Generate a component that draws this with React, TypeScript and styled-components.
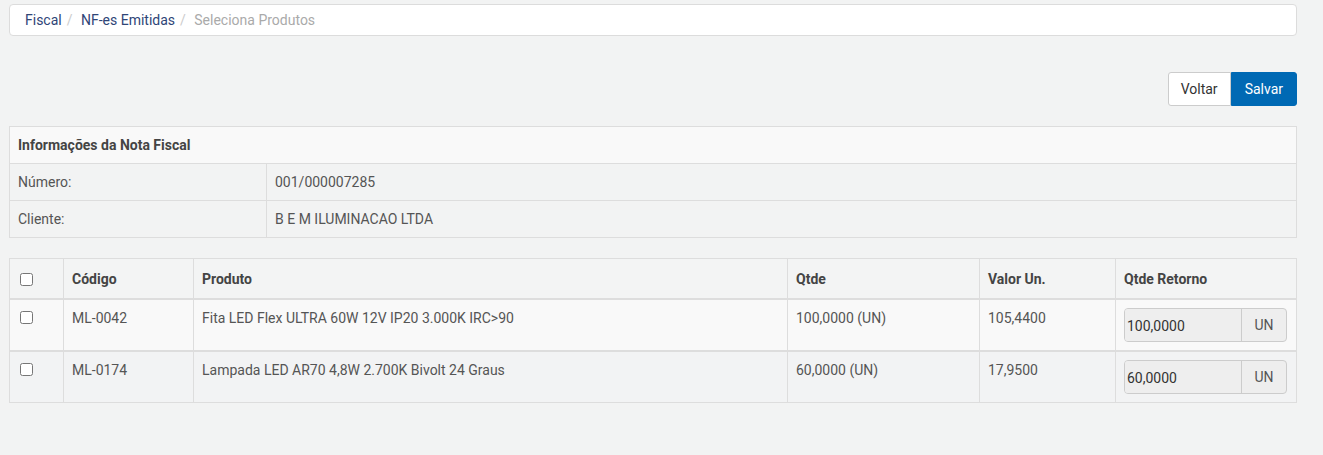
import React from 'react'
import styled, { createGlobalStyle } from 'styled-components'

const GlobalStyle = createGlobalStyle`
  body {
    margin: 0;
    background: #f2f3f3;
    font-family: Roboto, "Liberation Sans", sans-serif;
    font-size: 14px;
    color: #555;
  }
`

const Page = styled.div`
  padding: 4px 26px 40px 9px;
`

const Breadcrumb = styled.ol`
  display: flex;
  align-items: center;
  list-style: none;
  margin: 0;
  height: 32px;
  box-sizing: border-box;
  padding: 0 15px;
  background: #fff;
  border: 1px solid #dcdcdc;
  border-radius: 4px;
  line-height: 20px;
  & > li + li::before {
    content: '/\\00a0';
    color: #ccc;
    padding: 0 5px;
  }
`

const Crumb = styled.li<{ $active?: boolean }>`
  color: ${p => (p.$active ? '#aaa' : '#2f4577')};
`

const Toolbar = styled.div`
  display: flex;
  justify-content: flex-end;
  margin-top: 36px;
`

const Button = styled.button<{ $primary?: boolean }>`
  height: 34px;
  padding: 0 ${p => (p.$primary ? 13 : 12)}px;
  font-family: inherit;
  font-size: 14px;
  border: 1px solid ${p => (p.$primary ? '#0069b4' : '#ccc')};
  background: ${p => (p.$primary ? '#0069b4' : '#fff')};
  color: ${p => (p.$primary ? '#fff' : '#333')};
  border-radius: ${p => (p.$primary ? '0 3px 3px 0' : '3px 0 0 3px')};
`

const InfoTable = styled.table`
  width: 100%;
  margin-top: 20px;
  border-collapse: collapse;
  border: 1px solid #ddd;
`

const InfoHead = styled.th`
  text-align: left;
  font-weight: 700;
  color: #444;
  background: #f9f9f9;
  padding: 8px;
  line-height: 20px;
  border: 1px solid #ddd;
`

const InfoCell = styled.td<{ $label?: boolean }>`
  padding: 8px;
  line-height: 20px;
  border: 1px solid #ddd;
  width: ${p => (p.$label ? '240px' : 'auto')};
  color: #555;
`

const ItemTable = styled.table`
  width: 100%;
  margin-top: 20px;
  border-collapse: collapse;
  border: 1px solid #ddd;
`

const HeadCell = styled.th<{ $w?: number }>`
  text-align: left;
  font-weight: 700;
  color: #444;
  padding: 10px 8px 9px;
  line-height: 20px;
  border: 1px solid #ddd;
  border-bottom: 2px solid #ddd;
  width: ${p => (p.$w ? `${p.$w}px` : 'auto')};
  background: #f3f4f4;
`

const Row = styled.tr<{ $odd?: boolean }>`
  background: ${p => (p.$odd ? '#f9f9f9' : '#f2f3f4')};
  & + tr > td {
    border-top: 2px solid #ddd;
  }
`

const Cell = styled.td`
  vertical-align: top;
  padding: 8px;
  line-height: 20px;
  border: 1px solid #ddd;
`

const Check = styled.input.attrs({ type: 'checkbox' })<{ $top?: number }>`
  width: 13px;
  height: 13px;
  margin: ${p => p.$top ?? 3}px 0 0 2px;
  display: block;
`

const InputGroup = styled.div`
  display: flex;
  height: 34px;
  width: 163px;
  box-sizing: border-box;
  border: 1px solid #ccc;
  border-radius: 4px;
  background: #eee;
  overflow: hidden;
`

const QtyInput = styled.input`
  flex: 1;
  min-width: 0;
  border: none;
  background: #eee;
  font-family: inherit;
  font-size: 14px;
  color: #333;
  padding: 2px 0 0 2px;
  outline: none;
`

const Addon = styled.span`
  width: 44px;
  display: flex;
  align-items: center;
  justify-content: center;
  border-left: 1px solid #ccc;
  color: #555;
`

const items = [
  { code: 'ML-0042', name: 'Fita LED Flex ULTRA 60W 12V IP20 3.000K IRC>90', qtde: '100,0000 (UN)', valor: '105,4400', ret: '100,0000' },
  { code: 'ML-0174', name: 'Lampada LED AR70 4,8W 2.700K Bivolt 24 Graus', qtde: '60,0000 (UN)', valor: '17,9500', ret: '60,0000' },
]

export default function App() {
  return (
    <Page>
      <GlobalStyle />
      <Breadcrumb>
        <Crumb>Fiscal</Crumb>
        <Crumb>NF-es Emitidas</Crumb>
        <Crumb $active>Seleciona Produtos</Crumb>
      </Breadcrumb>

      <Toolbar>
        <Button>Voltar</Button>
        <Button $primary>Salvar</Button>
      </Toolbar>

      <InfoTable>
        <thead>
          <tr>
            <InfoHead colSpan={2}>Informações da Nota Fiscal</InfoHead>
          </tr>
        </thead>
        <tbody>
          <tr>
            <InfoCell $label>Número:</InfoCell>
            <InfoCell>001/000007285</InfoCell>
          </tr>
          <tr>
            <InfoCell $label>Cliente:</InfoCell>
            <InfoCell>B E M ILUMINACAO LTDA</InfoCell>
          </tr>
        </tbody>
      </InfoTable>

      <ItemTable>
        <thead>
          <tr>
            <HeadCell $w={37}><Check $top={1} /></HeadCell>
            <HeadCell $w={113}>Código</HeadCell>
            <HeadCell>Produto</HeadCell>
            <HeadCell $w={175}>Qtde</HeadCell>
            <HeadCell $w={119}>Valor Un.</HeadCell>
            <HeadCell $w={164}>Qtde Retorno</HeadCell>
          </tr>
        </thead>
        <tbody>
          {items.map((it, i) => (
            <Row key={it.code} $odd={i % 2 === 0}>
              <Cell><Check /></Cell>
              <Cell>{it.code}</Cell>
              <Cell>{it.name}</Cell>
              <Cell>{it.qtde}</Cell>
              <Cell>{it.valor}</Cell>
              <Cell>
                <InputGroup>
                  <QtyInput defaultValue={it.ret} readOnly />
                  <Addon>UN</Addon>
                </InputGroup>
              </Cell>
            </Row>
          ))}
        </tbody>
      </ItemTable>
    </Page>
  )
}
